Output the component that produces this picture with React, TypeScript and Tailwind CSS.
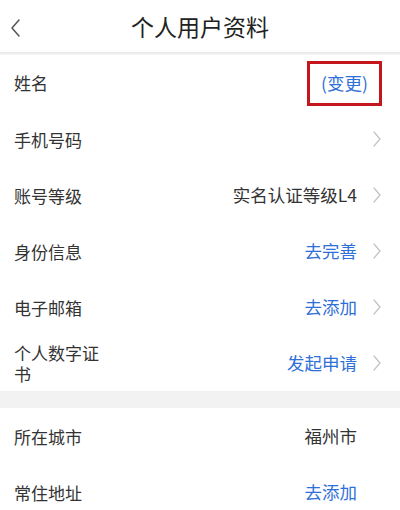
import React from "react";

const font = { fontFamily: '"Noto Sans CJK SC", "Noto Sans", sans-serif' };

function Chevron() {
  return (
    <svg width="10" height="18" viewBox="0 0 10 18" className="ml-[15px] shrink-0">
      <path d="M2 2 L8 9 L2 16" fill="none" stroke="#c4c4c4" strokeWidth="1.3" strokeLinecap="round" strokeLinejoin="round" />
    </svg>
  );
}

type Row = { label: React.ReactNode; value?: string; blue?: boolean; chevron?: boolean };

function ItemRow({ label, value, blue, chevron }: Row) {
  return (
    <div className="flex h-[56px] items-center pl-[14px] pr-[18px]">
      <div className="flex-1 text-[17px] leading-[21px] text-[#333]">{label}</div>
      {value && (
        <div className={`text-[17.5px] ${blue ? "text-[#2f6fd8]" : "text-[#333]"}`}>{value}</div>
      )}
      {chevron ? <Chevron /> : <div className="w-[25px] shrink-0" />}
    </div>
  );
}

export default function App() {
  return (
    <div className="w-[400px] h-[510px] overflow-hidden bg-white" style={font}>
      <div className="relative flex h-[52px] items-center justify-center">
        <svg width="12" height="20" viewBox="0 0 12 20" className="absolute left-[10px] top-[18px]">
          <path d="M9 2 L2 10 L9 18" fill="none" stroke="#555" strokeWidth="1.5" strokeLinecap="round" strokeLinejoin="round" />
        </svg>
        <div className="text-[23px] text-[#222]">个人用户资料</div>
      </div>
      <div className="h-[3px] bg-gradient-to-b from-[#e6e6e6] to-[#f7f7f7]" />
      <div className="flex h-[56px] items-center pl-[14px] pr-[18px]">
        <div className="flex-1 text-[17px] text-[#333]">姓名</div>
        <div className="flex h-[45px] w-[75px] items-center justify-center border-[3px] border-[#c4161c] text-[17.5px] text-[#2f6fd8]">
          (变更)
        </div>
      </div>
      <ItemRow label="手机号码" chevron />
      <ItemRow label="账号等级" value="实名认证等级L4" chevron />
      <ItemRow label="身份信息" value="去完善" blue chevron />
      <ItemRow label="电子邮箱" value="去添加" blue chevron />
      <ItemRow label={<div className="w-[100px]">个人数字证书</div>} value="发起申请" blue chevron />
      <div className="h-[17px] bg-[#f2f2f2]" />
      <ItemRow label="所在城市" value="福州市" />
      <ItemRow label="常住地址" value="去添加" blue />
    </div>
  );
}
